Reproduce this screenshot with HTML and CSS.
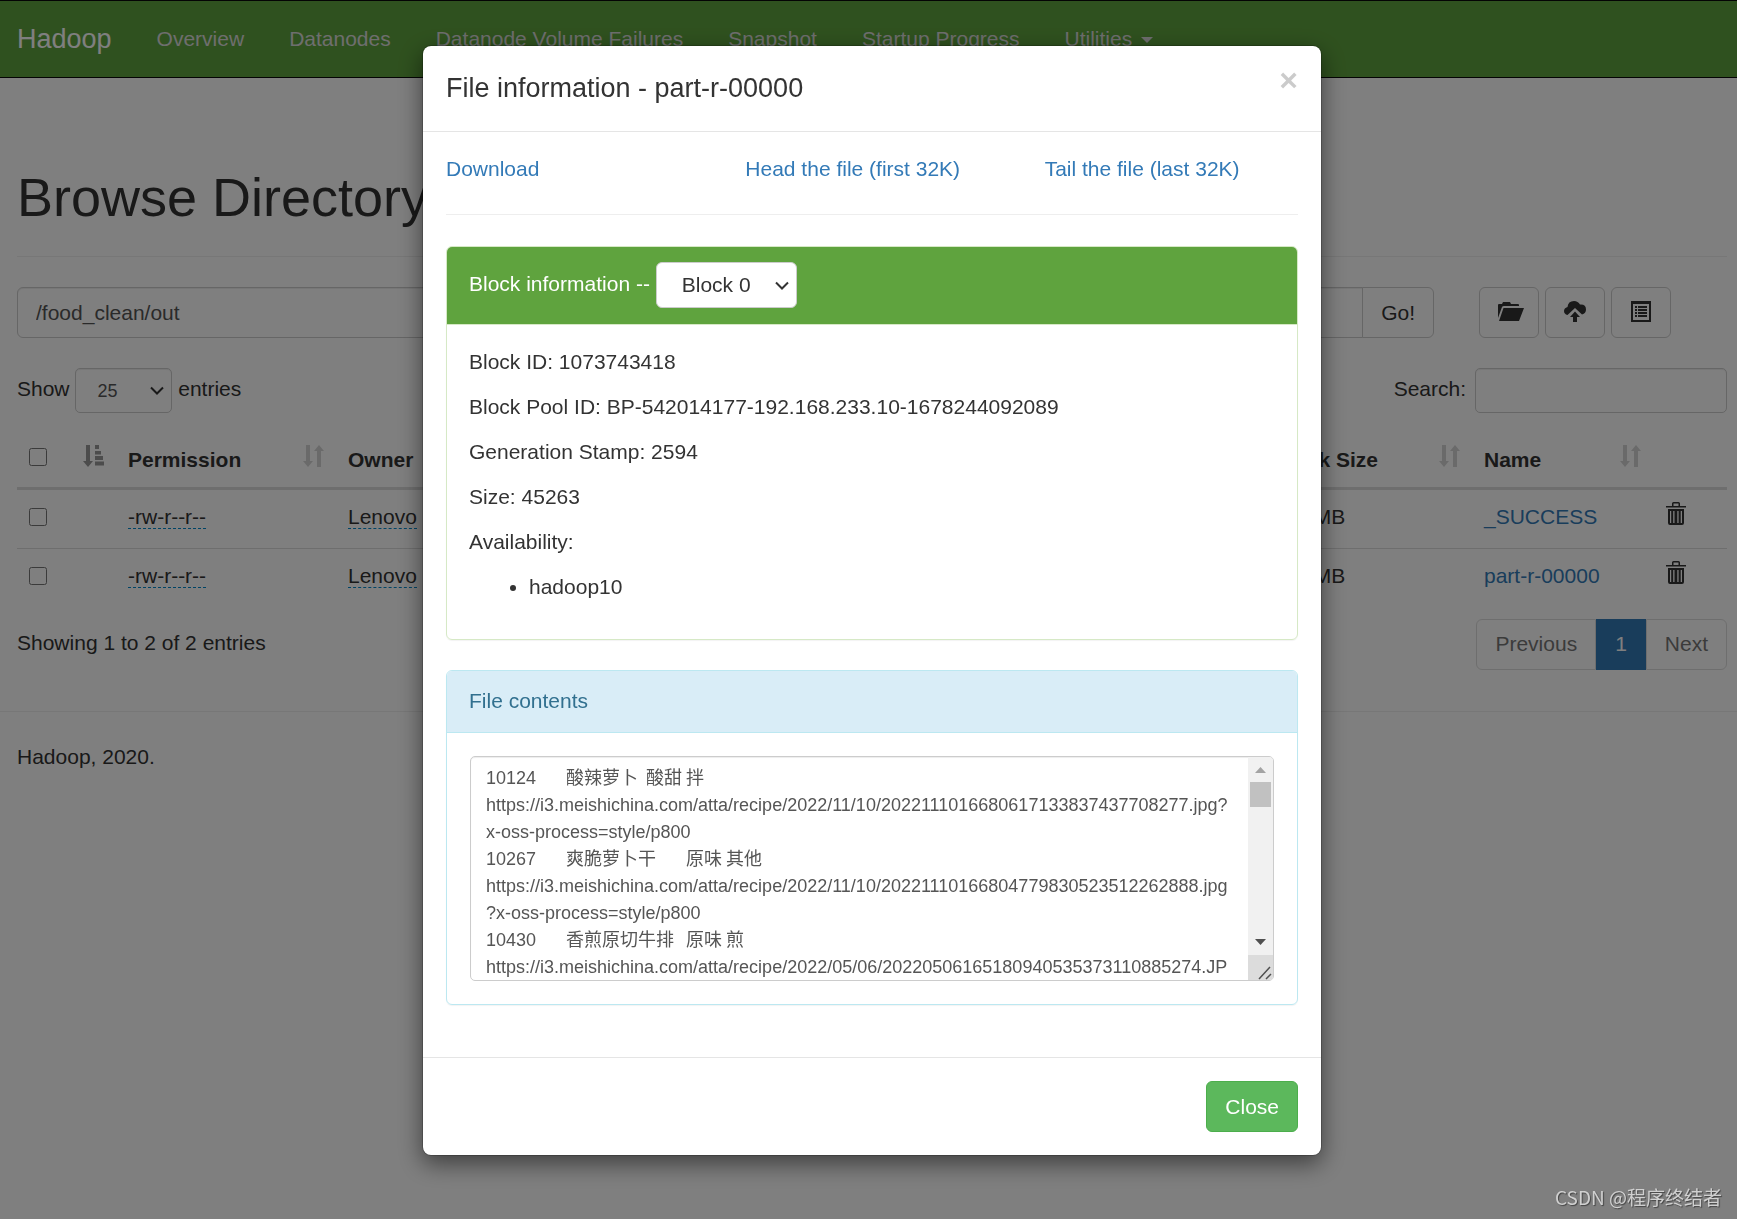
FILE: index.html
```html
<!DOCTYPE html>
<html lang="en">
<head>
    <meta charset="UTF-8">
    <meta name="viewport" content="width=device-width, initial-scale=1.0">
    <title>Browsing HDFS</title>
    <link rel="stylesheet" href="styles.css">
</head>
<body>
    <svg class="sprite" aria-hidden="true">
        <symbol id="icon-sort" viewBox="0 0 21 22">
            <path d="M3 0h4v16h3l-5 6-5-6h3zM14 22h4V6h3l-5-6-5 6h3z"/>
        </symbol>
        <symbol id="icon-sort-asc" viewBox="0 0 21 22">
            <path d="M3 0h4v16h3l-5 6-5-6h3zM12 0h4v4h-4zM12 6h6v3.500h-6zM12 11h8v4h-8zM12 16.500h9v4h-9z"/>
        </symbol>
        <symbol id="icon-trash" viewBox="0 0 20 23">
            <path d="M6 4V1.500Q6 0 7.500 0h5Q14 0 14 1.500V4h6v1.500H0V4zM7.500 4h5V1.500h-5zM2 7h16v14q0 2-2 2H4q-2 0-2-2zM4 9v12h1.200V9zM7.200 9v12h1.300V9zM11.300 9v12h1.300V9zM14.700 9v12H16V9z" fill-rule="evenodd"/>
        </symbol>
    </svg>

    <header class="navbar">
        <a class="navbar-brand" href="#">Hadoop</a>
        <nav class="navbar-nav">
            <a href="#">Overview</a>
            <a href="#">Datanodes</a>
            <a href="#">Datanode Volume Failures</a>
            <a href="#">Snapshot</a>
            <a href="#">Startup Progress</a>
            <a href="#">Utilities <span class="caret"></span></a>
        </nav>
    </header>

    <main class="container">
        <div class="page-header">
            <h1>Browse Directory</h1>
        </div>

        <form class="browse-row">
            <div class="input-group">
                <input type="text" id="directory" class="form-control" value="/food_clean/out" aria-label="Directory">
                <button type="button" class="btn btn-default">Go!</button>
            </div>
            <div class="toolbar">
                <button type="button" class="btn btn-default btn-icon" title="Create Directory">
                    <svg width="30" height="19" viewBox="-4 0 30 19"><path d="M0 16V3q0-1 1-1h3l1-2h7l1 2h7q1 0 1 1v1H6Q4.500 4 4 5zM5.500 6H26l-5 13H1z"/></svg>
                </button>
                <button type="button" class="btn btn-default btn-icon" title="Upload Files">
                    <svg width="22" height="21" viewBox="0 0 22 21"><path d="M3.500 14Q0 13 0 10q0-3 3.500-4Q4 0 10 0q4 0 6 3.500 6-.5 6 5 0 4-4 5L11 7zM11 10.500l5 5.500h-3v5H9v-5H6z"/></svg>
                </button>
                <button type="button" class="btn btn-default btn-icon" title="Cut &amp; Paste">
                    <svg class="icon-list" width="20" height="21" viewBox="0 0 20 21"><path d="M0 0h20v21H0zM2 3v16h16V3z" fill-rule="evenodd"/><path d="M4 5h2v2H4zM7 5h9v2H7zM4 8h2v2H4zM7 8h9v2H7zM4 11h2v2H4zM7 11h9v2H7zM4 14h2v2H4zM7 14h9v2H7z"/></svg>
                </button>
            </div>
        </form>

        <div class="table-controls">
            <label>Show <select class="form-control input-sm length-select"><option>25</option><option>50</option><option>100</option></select> entries</label>
            <label>Search:<input type="search" class="form-control input-sm search-input"></label>
        </div>

        <table class="table">
            <colgroup>
                <col class="col-check">
                <col class="col-permission">
                <col class="col-owner">
                <col class="col-group">
                <col class="col-size">
                <col>
                <col class="col-replication">
                <col class="col-block">
                <col class="col-name">
                <col class="col-trash">
            </colgroup>
            <thead>
                <tr>
                    <th><input type="checkbox" aria-label="Select all"><svg class="sort active"><use href="#icon-sort-asc"/></svg></th>
                    <th>Permission<svg class="sort"><use href="#icon-sort"/></svg></th>
                    <th>Owner<svg class="sort"><use href="#icon-sort"/></svg></th>
                    <th>Group<svg class="sort"><use href="#icon-sort"/></svg></th>
                    <th>Size<svg class="sort"><use href="#icon-sort"/></svg></th>
                    <th>Last Modified<svg class="sort"><use href="#icon-sort"/></svg></th>
                    <th>Replication<svg class="sort"><use href="#icon-sort"/></svg></th>
                    <th>Block Size<svg class="sort"><use href="#icon-sort"/></svg></th>
                    <th>Name<svg class="sort"><use href="#icon-sort"/></svg></th>
                    <th></th>
                </tr>
            </thead>
            <tbody>
                <tr>
                    <td><input type="checkbox" aria-label="Select _SUCCESS"></td>
                    <td><span class="editable">-rw-r--r--</span></td>
                    <td><span class="editable">Lenovo</span></td>
                    <td><span class="editable">supergroup</span></td>
                    <td>0 B</td>
                    <td>Mar 08 11:02</td>
                    <td><span class="editable">3</span></td>
                    <td>128 MB</td>
                    <td><a href="#">_SUCCESS</a></td>
                    <td><svg class="trash"><use href="#icon-trash"/></svg></td>
                </tr>
                <tr>
                    <td><input type="checkbox" aria-label="Select part-r-00000"></td>
                    <td><span class="editable">-rw-r--r--</span></td>
                    <td><span class="editable">Lenovo</span></td>
                    <td><span class="editable">supergroup</span></td>
                    <td>44.2 KB</td>
                    <td>Mar 08 11:02</td>
                    <td><span class="editable">3</span></td>
                    <td>128 MB</td>
                    <td><a href="#">part-r-00000</a></td>
                    <td><svg class="trash"><use href="#icon-trash"/></svg></td>
                </tr>
            </tbody>
        </table>

        <div class="table-footer">
            <div class="table-info">Showing 1 to 2 of 2 entries</div>
            <div class="pagination">
                <a href="#">Previous</a>
                <a href="#" class="active">1</a>
                <a href="#">Next</a>
            </div>
        </div>
    </main>

    <footer class="footer">Hadoop, 2020.</footer>

    <div class="modal">
        <div class="modal-content" role="dialog" aria-labelledby="file-info-title">
            <div class="modal-header">
                <h4 id="file-info-title">File information - part-r-00000</h4>
                <button type="button" class="close" aria-label="Close">&times;</button>
            </div>
            <div class="modal-body">
                <div class="file-links">
                    <a href="#">Download</a>
                    <a href="#">Head the file (first 32K)</a>
                    <a href="#">Tail the file (last 32K)</a>
                </div>
                <hr>
                <div class="panel panel-success">
                    <div class="panel-heading">
                        <label for="block-select">Block information --</label>
                        <select id="block-select" class="block-select"><option>Block 0</option></select>
                    </div>
                    <div class="panel-body">
                        <p>Block ID: 1073743418</p>
                        <p>Block Pool ID: BP-542014177-192.168.233.10-1678244092089</p>
                        <p>Generation Stamp: 2594</p>
                        <p>Size: 45263</p>
                        <p>Availability:</p>
                        <ul>
                            <li>hadoop10</li>
                        </ul>
                    </div>
                </div>
                <div class="panel panel-info">
                    <div class="panel-heading"><label for="file-contents">File contents</label></div>
                    <div class="panel-body">
                        <div class="file-contents">
                            <textarea id="file-contents" class="form-control" readonly>10124	酸辣萝卜	酸甜	拌	https://i3.meishichina.com/atta/recipe/2022/11/10/2022111016680617133837437708277.jpg?x-oss-process=style/p800
10267	爽脆萝卜干	原味	其他	https://i3.meishichina.com/atta/recipe/2022/11/10/20221110166804779830523512262888.jpg?x-oss-process=style/p800
10430	香煎原切牛排	原味	煎	https://i3.meishichina.com/atta/recipe/2022/05/06/20220506165180940535373110885274.JPG?x-oss-process=style/p800
</textarea>
                            <div class="scrollbar" aria-hidden="true">
                                <svg class="scroll-up" width="25" height="25"><path d="M7 16l5.500-6 5.500 6z"/></svg>
                                <div class="scroll-thumb"></div>
                                <svg class="scroll-down" width="25" height="25"><path d="M7 9l5.500 6L18 9z"/></svg>
                                <svg class="scroll-grip" width="25" height="25"><path d="M11 24l11-12M18 24l5-5"/></svg>
                            </div>
                        </div>
                    </div>
                </div>
            </div>
            <div class="modal-footer">
                <button type="button" class="btn btn-success">Close</button>
            </div>
        </div>
    </div>

    <div class="watermark">CSDN @程序终结者</div>
</body>
</html>
```
FILE: styles.css
```css
* {
    box-sizing: border-box;
}
body {
    margin: 0;
    font-family: "Liberation Sans", Arial, "Noto Sans CJK SC", sans-serif;
    font-size: 21px;
    line-height: 30px;
    color: #333;
    background-color: #fff;
}
input, select, button, textarea {
    font-family: inherit;
    font-size: inherit;
    line-height: inherit;
}
a {
    color: #337ab7;
    text-decoration: none;
}
h1, h4 {
    margin: 0;
    font-weight: 500;
}
.sprite {
    display: none;
}

/* Navbar */
.navbar {
    display: flex;
    align-items: center;
    gap: 45px;
    height: 78px;
    padding-left: 17px;
    background-color: #5fa33e;
    border: solid #080808;
    border-width: 1px 0;
}
.navbar-brand {
    font-size: 27px;
    color: #fff;
}
.navbar-nav {
    display: flex;
    gap: 45px;
}
.navbar-nav a {
    color: #dcdcdc;
    white-space: nowrap;
}
.caret {
    display: inline-block;
    margin-left: 3px;
    vertical-align: middle;
    border-top: 6px solid;
    border-left: 6px solid transparent;
    border-right: 6px solid transparent;
}

/* Page */
.container {
    padding: 90px 10px 0 17px;
}
.page-header {
    padding-bottom: 29px;
    margin-bottom: 30px;
    border-bottom: 1px solid #eee;
}
.page-header h1 {
    font-size: 54px;
    line-height: 59px;
}
.form-control {
    height: 51px;
    padding: 9px 18px;
    color: #555;
    background-color: #fff;
    border: 1px solid #ccc;
    border-radius: 6px;
    box-shadow: inset 0 1px 1px rgba(0, 0, 0, .075);
}
.btn {
    height: 51px;
    padding: 0 18px;
    border: 1px solid #ccc;
    border-radius: 6px;
    cursor: pointer;
}
.btn-default {
    color: #333;
    background-color: #fff;
}
.btn-success {
    color: #fff;
    background-color: #5cb85c;
    border-color: #4cae4c;
}
.browse-row {
    display: flex;
    margin-bottom: 30px;
}
.input-group {
    display: flex;
    flex: 1;
}
.input-group .form-control {
    flex: 1;
    border-radius: 6px 0 0 6px;
}
.input-group .btn {
    margin-left: -1px;
    border-radius: 0 6px 6px 0;
}
.toolbar {
    display: flex;
    gap: 6px;
    width: 248px;
    margin-left: 45px;
}
.btn-icon {
    display: flex;
    align-items: center;
    justify-content: center;
    width: 60px;
    padding: 0 0 3px;
}
.btn-icon svg {
    fill: #333;
}
.table-controls {
    display: flex;
    justify-content: space-between;
    margin-bottom: 20px;
}
.input-sm {
    height: 45px;
    padding: 7px 15px;
    font-size: 18px;
    border-radius: 5px;
    vertical-align: middle;
}
.length-select, .block-select {
    appearance: none;
    background: #fff url("data:image/svg+xml,%3Csvg xmlns='http://www.w3.org/2000/svg' width='14' height='9'%3E%3Cpath d='M1 1.500l6 6 6-6' fill='none' stroke='%23333' stroke-width='2'/%3E%3C/svg%3E") no-repeat right 7px center;
}
.length-select {
    width: 97px;
    padding-left: 21px;
}
.search-input {
    width: 252px;
    margin-left: 9px;
}

/* Table */
.table {
    width: 100%;
    table-layout: fixed;
    border-spacing: 0;
}
.col-check { width: 99px; }
.col-permission { width: 220px; }
.col-owner { width: 160px; }
.col-group { width: 180px; }
.col-size { width: 140px; }
.col-replication { width: 200px; }
.col-block { width: 211px; }
.col-name { width: 181px; }
.col-trash { width: 74px; }
.table th, .table td {
    padding: 12px;
    text-align: left;
    vertical-align: top;
    white-space: nowrap;
}
.table th {
    position: relative;
    border-bottom: 3px solid #ddd;
}
.table td {
    height: 58px;
}
.table tr + tr td {
    height: 59px;
    border-top: 1px solid #ddd;
}
.table input {
    display: block;
    width: 18px;
    height: 18px;
    margin: 3px 0 0;
}
.table td input {
    margin-top: 6px;
}
.sort {
    position: absolute;
    top: 12px;
    right: 12px;
    width: 21px;
    height: 22px;
    fill: #333;
    opacity: .2;
}
.sort.active {
    opacity: .5;
}
.editable {
    border-bottom: 1px dashed #08c;
}
.trash {
    display: block;
    width: 20px;
    height: 23px;
    margin: 0 1px;
    fill: #333;
}
.table-footer {
    display: flex;
    justify-content: space-between;
    margin-top: 12px;
}
.table-info {
    padding-top: 9px;
}
.pagination {
    display: flex;
}
.pagination a {
    padding: 9px 18px 10px;
    color: #777;
    background-color: #fff;
    border: 1px solid #ddd;
}
.pagination a:first-child {
    border-radius: 6px 0 0 6px;
}
.pagination a:last-child {
    border-radius: 0 6px 6px 0;
}
.pagination .active {
    color: #fff;
    background-color: #337ab7;
    border-color: #337ab7;
}
.footer {
    margin-top: 41px;
    padding: 30px 17px;
    border-top: 1px solid #eee;
}

/* Modal */
.modal {
    position: fixed;
    top: 0;
    right: 0;
    bottom: 0;
    left: 0;
    padding: 45px 0 45px 7px;
    overflow: auto;
    background-color: rgba(0, 0, 0, .5);
}
.modal-content {
    max-width: 900px;
    margin: 0 auto;
    background-color: #fff;
    background-clip: padding-box;
    border: 1px solid rgba(0, 0, 0, .2);
    border-radius: 9px;
    box-shadow: 0 8px 23px rgba(0, 0, 0, .5);
}
.modal-header {
    display: flex;
    justify-content: space-between;
    align-items: flex-start;
    padding: 23px;
    border-bottom: 1px solid #e5e5e5;
}
.modal-header h4 {
    font-size: 27px;
    line-height: 39px;
}
.close {
    padding: 0;
    font-size: 32px;
    font-weight: bold;
    line-height: 22px;
    color: #000;
    text-shadow: 0 1px 0 #fff;
    background: none;
    border: 0;
    opacity: .2;
    cursor: pointer;
}
.modal-body {
    padding: 22px 23px;
}
.modal-body hr {
    margin: 30px 0 31px;
    border: 0;
    border-top: 1px solid #eee;
}
.file-links {
    display: grid;
    grid-template-columns: repeat(3, 1fr);
    margin: 0 -23px;
}
.file-links a {
    padding: 0 23px;
}
.panel {
    margin-bottom: 30px;
    border: 1px solid #d6e9c6;
    border-radius: 6px;
    box-shadow: 0 1px 1px rgba(0, 0, 0, .05);
}
.panel-heading {
    padding: 15px 22px 16px;
    border-bottom: 1px solid #d6e9c6;
    border-radius: 5px 5px 0 0;
}
.panel-body {
    padding: 22px;
}
.panel-success .panel-heading {
    color: #fff;
    background-color: #5fa33e;
}
.panel-info, .panel-info .panel-heading {
    border-color: #bce8f1;
}
.panel-info .panel-heading {
    color: #31708f;
    background-color: #d9edf7;
}
.panel-info .panel-body {
    padding: 23px;
}
.block-select {
    width: 141px;
    height: 46px;
    padding: 0 25px;
    color: #333;
    border: 1px solid #ccc;
    border-radius: 6px;
    vertical-align: middle;
}
.panel-body p {
    margin: 0 0 15px;
}
.panel-body ul {
    margin: 0 0 15px;
    padding-left: 60px;
}
.file-contents {
    position: relative;
}
.file-contents textarea {
    display: block;
    width: 100%;
    height: 225px;
    padding: 8px 43px 8px 15px;
    font-size: 18px;
    line-height: 27px;
    border-radius: 5px;
    resize: none;
}

/* Scrollbar laid over the right edge of the textarea */
.scrollbar {
    position: absolute;
    top: 1px;
    right: 1px;
    bottom: 1px;
    display: flex;
    flex-direction: column;
    width: 25px;
    background-color: #f1f1f1;
    border-radius: 0 4px 4px 0;
    overflow: hidden;
}
.scroll-thumb {
    height: 25px;
    margin: 0 2px;
    background-color: #c1c1c1;
}
.scroll-up {
    fill: #a3a3a3;
}
.scroll-down {
    margin-top: auto;
    fill: #505050;
}
.scroll-grip {
    background-color: #dcdcdc;
    stroke: #505050;
    stroke-width: 1.5;
}
.modal-footer {
    padding: 23px;
    text-align: right;
    border-top: 1px solid #e5e5e5;
}
.modal-footer .btn {
    display: block;
    margin-left: auto;
}

.watermark {
    position: fixed;
    right: 15px;
    bottom: 7px;
    font-family: "Noto Sans CJK SC", sans-serif;
    font-size: 19px;
    color: #d0d0d0;
    text-shadow: 1px 1px 1px #444;
}
```
